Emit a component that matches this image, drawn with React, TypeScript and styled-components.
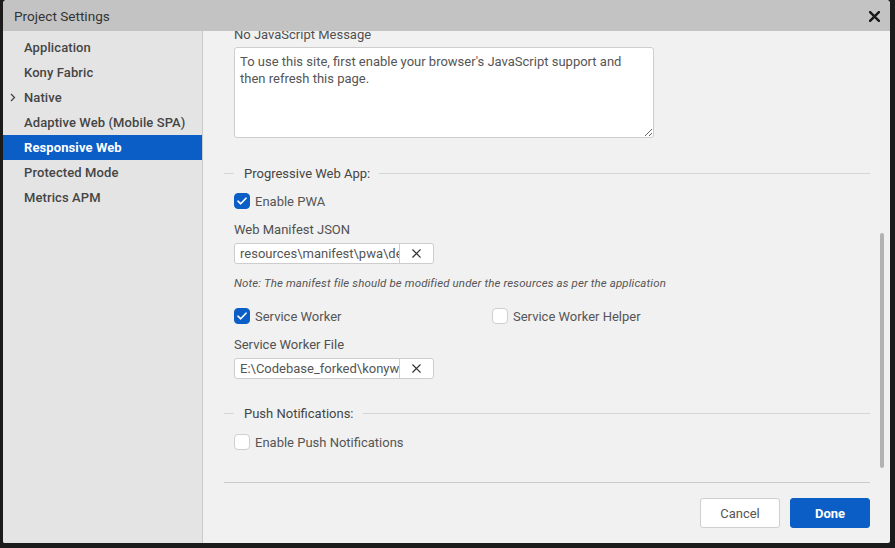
import React from "react";
import styled, { createGlobalStyle } from "styled-components";

const Global = createGlobalStyle`
  html, body { margin: 0; padding: 0; background: #1b1b1b; }
  body { font-family: Roboto, "Liberation Sans", sans-serif; }
  #root { width: 895px; height: 548px; overflow: hidden; }
`;

const Page = styled.div`
  width: 895px;
  height: 548px;
  padding-left: 3px;
  box-sizing: border-box;
`;

const Dialog = styled.div`
  width: 887px;
  height: 543px;
  display: flex;
  flex-direction: column;
  border-radius: 4px 4px 2px 2px;
  overflow: hidden;
  background: #f1f1f1;
`;

const TitleBar = styled.div`
  height: 31px;
  flex: none;
  background: #c3c3c3;
  display: flex;
  align-items: center;
  justify-content: space-between;
  padding: 1px 10px 0 11px;
  box-sizing: border-box;
  color: #333;
  font-size: 13.6px;
`;

const CloseBtn = styled.div`
  width: 12px;
  height: 12px;
  display: flex;
  align-items: center;
  justify-content: center;
`;

const Body = styled.div`
  flex: 1;
  display: flex;
  min-height: 0;
`;

const Sidebar = styled.div`
  width: 199px;
  flex: none;
  background: #e4e4e4;
  border-right: 1px solid #c9c9c9;
  padding-top: 4px;
  display: flex;
  flex-direction: column;
`;

const NavItem = styled.div<{ $active?: boolean }>`
  height: 25px;
  display: flex;
  align-items: center;
  position: relative;
  padding-left: 21px;
  font-size: 13px;
  letter-spacing: 0.1px;
  color: ${(p) => (p.$active ? "#fff" : "#454545")};
  background: ${(p) => (p.$active ? "#0b5ec5" : "transparent")};
  font-weight: ${(p) => (p.$active ? 700 : 500)};
`;

const Chevron = styled.span`
  position: absolute;
  left: 7px;
  top: 8px;
  display: flex;
`;

const Content = styled.div`
  flex: 1;
  display: flex;
  flex-direction: column;
  position: relative;
  min-width: 0;
`;

const ScrollArea = styled.div`
  flex: 1;
  overflow: hidden;
  min-height: 0;
`;

const ScrollInner = styled.div`
  margin-top: -5px;
  padding: 0 20px 0 21px;
  display: flex;
  flex-direction: column;
`;

const Indent = styled.div`
  padding-left: 10px;
  display: flex;
  flex-direction: column;
`;

const FieldLabel = styled.div<{ $mt?: number }>`
  height: 18px;
  line-height: 18px;
  margin-top: ${(p) => p.$mt ?? 0}px;
  font-size: 13px;
  color: #505050;
`;

const TextArea = styled.textarea`
  margin-top: 3px;
  width: 420px;
  height: 91px;
  box-sizing: border-box;
  border: 1px solid #cdcdcd;
  border-radius: 3px;
  background: #fff;
  padding: 5px 5px;
  font-family: Roboto, "Liberation Sans", sans-serif;
  font-size: 13px;
  line-height: 17px;
  color: #555;
  outline: none;
  resize: both;
`;

const SectionHeader = styled.div<{ $mt: number }>`
  margin-top: ${(p) => p.$mt}px;
  height: 20px;
  display: flex;
  align-items: center;
  font-size: 13px;
  color: #454545;
  &::before {
    content: "";
    width: 10px;
    height: 1px;
    background: #d5d5d5;
    margin-right: 10px;
  }
  &::after {
    content: "";
    flex: 1;
    height: 1px;
    background: #d5d5d5;
    margin-left: 9px;
  }
`;

const CheckRow = styled.div<{ $mt: number }>`
  margin-top: ${(p) => p.$mt}px;
  height: 20px;
  display: grid;
  grid-template-columns: 258px auto;
  align-items: center;
`;

const CheckItem = styled.label`
  display: flex;
  align-items: center;
  gap: 5px;
  font-size: 13px;
  color: #555;
`;

const Box = styled.span<{ $checked?: boolean }>`
  width: 16px;
  height: 16px;
  box-sizing: border-box;
  border-radius: 4px;
  display: flex;
  align-items: center;
  justify-content: center;
  background: ${(p) => (p.$checked ? "#0b5ec5" : "#fff")};
  border: 1px solid ${(p) => (p.$checked ? "#0b5ec5" : "#cfcfcf")};
`;

const PathField = styled.div`
  margin-top: 4px;
  width: 200px;
  height: 21px;
  box-sizing: border-box;
  display: flex;
  background: #fff;
  border: 1px solid #cdcdcd;
  border-radius: 3px;
`;

const PathInput = styled.input`
  width: 165px;
  flex: none;
  box-sizing: border-box;
  border: none;
  border-right: 1px solid #d0d0d0;
  padding: 0 0 0 5px;
  font-family: Roboto, "Liberation Sans", sans-serif;
  font-size: 13px;
  color: #555;
  background: transparent;
  outline: none;
`;

const ClearBtn = styled.div`
  flex: 1;
  display: flex;
  align-items: center;
  justify-content: center;
`;

const Note = styled.div`
  margin-top: 11px;
  height: 16px;
  line-height: 16px;
  font-size: 11.5px;
  letter-spacing: 0.12px;
  font-style: italic;
  color: #555;
  white-space: nowrap;
`;

const Footer = styled.div`
  flex: none;
  margin: 0 20px 0 21px;
  border-top: 1px solid #cbcbcb;
  padding: 15px 0 15px;
  display: flex;
  justify-content: flex-end;
  gap: 10px;
`;

const Button = styled.button<{ $primary?: boolean }>`
  width: 80px;
  height: 30px;
  border-radius: 3px;
  font-family: Roboto, "Liberation Sans", sans-serif;
  font-size: 13px;
  font-weight: ${(p) => (p.$primary ? 700 : 400)};
  color: ${(p) => (p.$primary ? "#fff" : "#555")};
  background: ${(p) => (p.$primary ? "#0b5ec5" : "#fff")};
  border: 1px solid ${(p) => (p.$primary ? "#0b5ec5" : "#cfcfcf")};
  padding: 0;
`;

const ScrollThumb = styled.div`
  position: absolute;
  right: 6px;
  top: 202px;
  width: 4px;
  height: 235px;
  border-radius: 2px;
  background: #b2b2b2;
`;

const Check = () => (
  <svg width="10" height="8" viewBox="0 0 10 8">
    <path d="M1 4.2 L3.7 6.8 L9 1.2" fill="none" stroke="#fff" strokeWidth="1.6" strokeLinecap="round" strokeLinejoin="round" />
  </svg>
);

const XIcon = ({ size, w, color }: { size: number; w: number; color: string }) => (
  <svg width={size} height={size} viewBox="0 0 10 10">
    <path d="M1 1 L9 9 M9 1 L1 9" stroke={color} strokeWidth={w} strokeLinecap="square" />
  </svg>
);

const CheckBox = ({ checked, label }: { checked?: boolean; label: string }) => (
  <CheckItem>
    <Box $checked={checked}>{checked && <Check />}</Box>
    {label}
  </CheckItem>
);

const nav = [
  "Application",
  "Kony Fabric",
  "Native",
  "Adaptive Web (Mobile SPA)",
  "Responsive Web",
  "Protected Mode",
  "Metrics APM",
];

export default function App() {
  return (
    <Page>
      <Global />
      <Dialog>
        <TitleBar>
          <span>Project Settings</span>
          <CloseBtn>
            <XIcon size={11} w={2.2} color="#1a1a1a" />
          </CloseBtn>
        </TitleBar>
        <Body>
          <Sidebar>
            {nav.map((n) => (
              <NavItem key={n} $active={n === "Responsive Web"}>
                {n === "Native" && (
                  <Chevron>
                    <svg width="6" height="9" viewBox="0 0 6 9">
                      <path d="M1 1 L4.5 4.5 L1 8" fill="none" stroke="#444" strokeWidth="1.3" />
                    </svg>
                  </Chevron>
                )}
                {n}
              </NavItem>
            ))}
          </Sidebar>
          <Content>
            <ScrollArea>
              <ScrollInner>
                <Indent>
                  <FieldLabel>No JavaScript Message</FieldLabel>
                  <TextArea
                    readOnly
                    defaultValue="To use this site, first enable your browser's JavaScript support and then refresh this page."
                  />
                </Indent>
                <SectionHeader $mt={25}>Progressive Web App:</SectionHeader>
                <Indent>
                  <CheckRow $mt={8}>
                    <CheckBox checked label="Enable PWA" />
                  </CheckRow>
                  <FieldLabel $mt={10}>Web Manifest JSON</FieldLabel>
                  <PathField>
                    <PathInput readOnly value="resources\manifest\pwa\default.json" />
                    <ClearBtn>
                      <XIcon size={9} w={1.4} color="#333" />
                    </ClearBtn>
                  </PathField>
                  <Note>Note: The manifest file should be modified under the resources as per the application</Note>
                  <CheckRow $mt={15}>
                    <CheckBox checked label="Service Worker" />
                    <CheckBox label="Service Worker Helper" />
                  </CheckRow>
                  <FieldLabel $mt={10}>Service Worker File</FieldLabel>
                  <PathField>
                    <PathInput readOnly value="E:\Codebase_forked\konyweb\sw.js" />
                    <ClearBtn>
                      <XIcon size={9} w={1.4} color="#333" />
                    </ClearBtn>
                  </PathField>
                </Indent>
                <SectionHeader $mt={24}>Push Notifications:</SectionHeader>
                <Indent>
                  <CheckRow $mt={9}>
                    <CheckBox label="Enable Push Notifications" />
                  </CheckRow>
                </Indent>
              </ScrollInner>
            </ScrollArea>
            <ScrollThumb />
            <Footer>
              <Button>Cancel</Button>
              <Button $primary>Done</Button>
            </Footer>
          </Content>
        </Body>
      </Dialog>
    </Page>
  );
}
